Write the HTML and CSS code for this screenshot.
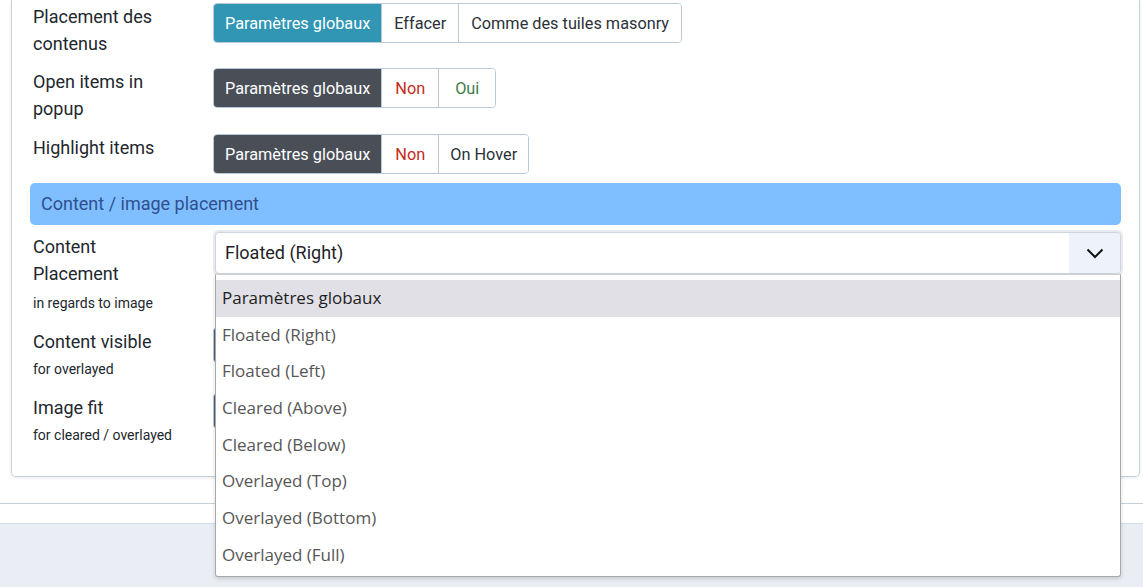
FILE: index.html
```html
<!DOCTYPE html>
<html lang="fr">
<head>
<meta charset="utf-8">
<link rel="stylesheet" href="styles.css">
</head>
<body>
<div class="page">
  <div class="card">
    <div class="row r1">
      <div class="label">Placement des contenus</div>
      <div class="control">
        <div class="btn-group">
          <span class="btn active-teal">Paramètres globaux</span>
          <span class="btn wide">Effacer</span>
          <span class="btn wide">Comme des tuiles masonry</span>
        </div>
      </div>
    </div>
    <div class="row r2">
      <div class="label">Open items in popup</div>
      <div class="control">
        <div class="btn-group">
          <span class="btn active-dark">Paramètres globaux</span>
          <span class="btn no">Non</span>
          <span class="btn yes">Oui</span>
        </div>
      </div>
    </div>
    <div class="row r3">
      <div class="label">Highlight items</div>
      <div class="control">
        <div class="btn-group">
          <span class="btn active-dark">Paramètres globaux</span>
          <span class="btn no">Non</span>
          <span class="btn">On Hover</span>
        </div>
      </div>
    </div>
    <div class="section-head">Content / image placement</div>
    <div class="row r4">
      <div class="label lower">Content Placement<div class="small first-small">in regards to image</div></div>
      <div class="control">
        <div class="select-wrap">
          <div class="select">
            <span class="select-value">Floated (Right)</span>
            <span class="select-arrow">
              <svg width="18" height="11" viewBox="0 0 18 11"><path d="M1.5 1.5 L9 9 L16.5 1.5" fill="none" stroke="#111" stroke-width="2"/></svg>
            </span>
          </div>
          <ul class="dropdown">
            <li class="opt selected">Paramètres globaux</li>
            <li class="opt">Floated (Right)</li>
            <li class="opt">Floated (Left)</li>
            <li class="opt">Cleared (Above)</li>
            <li class="opt">Cleared (Below)</li>
            <li class="opt">Overlayed (Top)</li>
            <li class="opt">Overlayed (Bottom)</li>
            <li class="opt">Overlayed (Full)</li>
          </ul>
        </div>
      </div>
    </div>
    <div class="row r5">
      <div class="label lower">Content visible<div class="small">for overlayed</div></div>
      <div class="control">
        <div class="btn-group small-group">
          <span class="btn active-slate hidden-btn"></span>
        </div>
      </div>
    </div>
    <div class="row r6">
      <div class="label lower">Image fit<div class="small">for cleared / overlayed</div></div>
      <div class="control">
        <div class="btn-group small-group">
          <span class="btn active-slate hidden-btn"></span>
        </div>
      </div>
    </div>
  </div>
</div>
<div class="strip"></div>
</body>
</html>
```

FILE: styles.css
```css
html, body {
  margin: 0;
  padding: 0;
}
body {
  background: #eaeef4;
  font-family: Roboto, "Liberation Sans", sans-serif;
  color: #22272e;
  height: 587px;
  overflow: hidden;
}
.page {
  background: #fff;
  padding: 0 3px 26px 11px;
  border-bottom: 1px solid #c6d0dc;
  box-shadow: 0 1px 2px rgba(120, 140, 170, 0.25);
}
.strip {
  background: #fff;
  height: 19px;
  border-bottom: 1px solid #d5dde6;
}
.card {
  border: 1px solid #c5d1df;
  border-top: none;
  border-radius: 0 0 5px 5px;
  padding: 3px 18px 30px 18px;
  box-shadow: 0 1px 3px rgba(60, 80, 110, 0.12);
}
.row {
  display: flex;
  align-items: flex-start;
}
.r1 { margin-bottom: 11px; }
.r2 { margin-bottom: 12px; }
.r3 { margin-bottom: 9px; }
.r4 { margin-bottom: 13px; }
.r5 { margin-bottom: 13px; }
.label {
  width: 147px;
  margin-right: 33px;
  flex: none;
  padding: 0 0 0 3px;
  font-size: 18px;
  line-height: 27px;
  color: #22272e;
}
.label.lower {
  padding-top: 1px;
}
.small {
  font-size: 14px;
  line-height: 21px;
  margin-top: 4px;
}
.small.first-small {
  margin-top: 6px;
}
.control {
  flex: 1;
  min-width: 0;
}
.btn-group {
  display: inline-flex;
  border: 1px solid #b9c9dc;
  border-radius: 4px;
  overflow: hidden;
  height: 38px;
}
.small-group {
  height: 34px;
}
.btn {
  display: flex;
  align-items: center;
  justify-content: center;
  box-sizing: border-box;
  min-width: 57px;
  padding: 0 11px;
  font-size: 16.3px;
  color: #2b3138;
  background: #fff;
  border-left: 1px solid #b9c9dc;
}
.btn.wide {
  padding: 0 12px;
}
.btn:first-child {
  border-left: none;
}
.hidden-btn {
  width: 168px;
}
.active-teal {
  background: #3096b4;
  color: #fff;
}
.active-dark {
  background: #4a4f57;
  color: #fff;
}
.active-slate {
  background: #4d5d70;
  color: #fff;
}
.no { color: #c42a22; }
.yes { color: #3f7d4c; }
.section-head {
  background: #80bfff;
  color: #2f4f90;
  font-size: 18px;
  height: 42px;
  line-height: 42px;
  padding-left: 11px;
  border-radius: 5px;
  margin-bottom: 7px;
}
.select-wrap {
  position: relative;
  margin-left: 2px;
}
.select {
  display: flex;
  height: 40px;
  border: 1px solid #cfd5dc;
  border-radius: 4px;
  box-shadow: 0 0 0 2px #e6e9ed;
  background: #fff;
  overflow: hidden;
}
.select-value {
  flex: 1;
  font-size: 18px;
  line-height: 40px;
  padding-left: 9px;
  color: #1f2328;
}
.select-arrow {
  width: 51px;
  background: #eef3fb;
  display: flex;
  align-items: center;
  justify-content: center;
}
.dropdown {
  position: absolute;
  top: 42px;
  left: 0;
  right: 0;
  margin: 0;
  padding: 5px 0 2px 0;
  list-style: none;
  background: #fff;
  border: 1px solid #a9a9a9;
  border-top-color: #d0d0d0;
  border-radius: 0 0 3px 3px;
  box-shadow: 0 2px 4px rgba(0, 0, 0, 0.15);
  font-family: "Open Sans", "Noto Sans", sans-serif;
  z-index: 5;
}
.opt {
  height: 36.7px;
  line-height: 36.7px;
  padding-left: 6px;
  font-size: 17px;
  color: #575757;
}
.opt.selected {
  background: #e1e0e6;
  color: #1e1e1e;
}
```
